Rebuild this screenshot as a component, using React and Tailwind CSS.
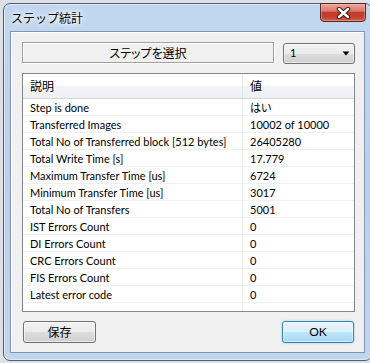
export default function App() {
  const rows = [
    ["Step is done", "はい"],
    ["Transferred Images", "10002 of 10000"],
    ["Total No of Transferred block [512 bytes]", "26405280"],
    ["Total Write Time [s]", "17.779"],
    ["Maximum Transfer Time [us]", "6724"],
    ["Minimum Transfer Time [us]", "3017"],
    ["Total No of Transfers", "5001"],
    ["IST Errors Count", "0"],
    ["DI Errors Count", "0"],
    ["CRC Errors Count", "0"],
    ["FIS Errors Count", "0"],
    ["Latest error code", "0"],
  ];
  return (
    <div className="w-[370px] h-[363px] overflow-hidden bg-[#dde0e4] pt-[3px] pl-[3px] font-['Lato','Noto_Sans_CJK_JP',sans-serif] text-black">
      <div className="w-[369px] h-[358px] rounded-[7px] border border-[#4f5e73] bg-gradient-to-b from-[#c2d7ef] via-[#b8d0ec] to-[#c0d6ef] flex flex-col shadow-[inset_0_0_0_1px_rgba(255,255,255,0.5)]">
        {/* title bar */}
        <div className="h-[27px] flex items-start justify-between shrink-0">
          <span className="pl-[7px] pt-[6px] text-[12px] leading-[15px] font-['Noto_Sans_CJK_JP',sans-serif] [text-shadow:0_0_6px_#fff,0_0_10px_#fff,0_0_3px_#fff]">
            ステップ統計
          </span>
          <div className="w-[46px] h-[19px] mr-[5px] -mt-px rounded-b-[4px] border border-[#5a2820] bg-[linear-gradient(to_bottom,#e9a59a_0%,#d9796b_42%,#c13a2a_50%,#c4402f_75%,#d2604f_100%)] shadow-[inset_0_0_0_1px_rgba(255,200,190,0.4)] flex items-center justify-center">
            <svg width="15" height="12" viewBox="0 0 15 12">
              <path d="M3 2 L12 10 M12 2 L3 10" stroke="#3e1a15" strokeWidth="4.4" strokeLinecap="round" fill="none" />
              <path d="M3 2 L12 10 M12 2 L3 10" stroke="#ffffff" strokeWidth="2.4" strokeLinecap="round" fill="none" />
            </svg>
          </div>
        </div>
        {/* client */}
        <div className="mx-[6px] h-[322px] shrink-0 border border-[#8195b0] bg-[#f0f0f0] flex flex-col pt-[10px] pl-[11px] pr-[9px] shadow-[inset_1px_1px_0_#fff]">
          <div className="flex h-[22px] shrink-0">
            <div className="w-[252px] h-[21px] border border-[#a0a0a0] shadow-[1px_1px_0_#fff,inset_1px_1px_0_#fff] flex items-center justify-center text-[12px] font-['Noto_Sans_CJK_JP',sans-serif] [font-feature-settings:'palt'] leading-none">
              ステップを選択
            </div>
            <div className="ml-[9px] mt-px w-[72px] h-[21px] rounded-[3px] border border-[#707070] bg-[linear-gradient(to_bottom,#f2f2f2_0%,#ebebeb_50%,#dddddd_51%,#cfcfcf_100%)] shadow-[inset_0_0_0_1px_rgba(255,255,255,0.6)] flex items-center justify-between pl-[6px] pr-[4px] text-[11px]">
              <span>1</span>
              <svg width="8" height="5" viewBox="0 0 8 5">
                <path d="M0.5 0.5 H7.5 L4 4.5 Z" fill="#000" />
              </svg>
            </div>
          </div>
          {/* table */}
          <div className="mt-[9px] h-[239px] shrink-0 border border-[#828790] bg-white flex flex-col text-[11px]">
            <div className="h-[25px] shrink-0 grid grid-cols-[220px_1fr] border-b border-[#d5d5d5] bg-[linear-gradient(to_bottom,#ffffff_0%,#ffffff_50%,#f3f4f6_51%,#eef0f3_100%)] font-['Noto_Sans_CJK_JP',sans-serif] text-[12px]">
              <div className="pl-[7px] flex items-center border-r border-[#e3e5e8]">説明</div>
              <div className="pl-[7px] flex items-center">値</div>
            </div>
            {rows.map(([k, v]) => (
              <div key={k} className="h-[17px] shrink-0 grid grid-cols-[220px_1fr] border-b border-[#f0f0f0]">
                <div className="pl-[7px] flex items-center border-r border-[#f0f0f0] whitespace-nowrap leading-none">{k}</div>
                <div className="pl-[7px] flex items-center whitespace-nowrap leading-none [font-feature-settings:'palt']">{v}</div>
              </div>
            ))}
            <div className="flex-1 grid grid-cols-[220px_1fr]">
              <div className="border-r border-[#f0f0f0]"></div>
              <div></div>
            </div>
          </div>
          {/* buttons */}
          <div className="mt-[9px] h-[22px] shrink-0 flex justify-between">
            <div className="ml-px w-[73px] h-[22px] rounded-[3px] border border-[#707070] bg-[linear-gradient(to_bottom,#f2f2f2_0%,#ebebeb_50%,#dddddd_51%,#cfcfcf_100%)] shadow-[inset_0_0_0_1px_rgba(255,255,255,0.6)] flex items-center justify-center text-[12px] font-['Noto_Sans_CJK_JP',sans-serif] leading-none">
              保存
            </div>
            <div className="mr-px w-[72px] h-[22px] rounded-[3px] border border-[#3c7fb1] bg-[linear-gradient(to_bottom,#eaf6fd_0%,#d9f0fc_50%,#bee6fd_51%,#a7d9f5_100%)] shadow-[inset_0_0_0_1px_rgba(255,255,255,0.5),0_0_2px_#7fc4ea] flex items-center justify-center text-[12px] leading-none">
              OK
            </div>
          </div>
        </div>
      </div>
    </div>
  );
}
